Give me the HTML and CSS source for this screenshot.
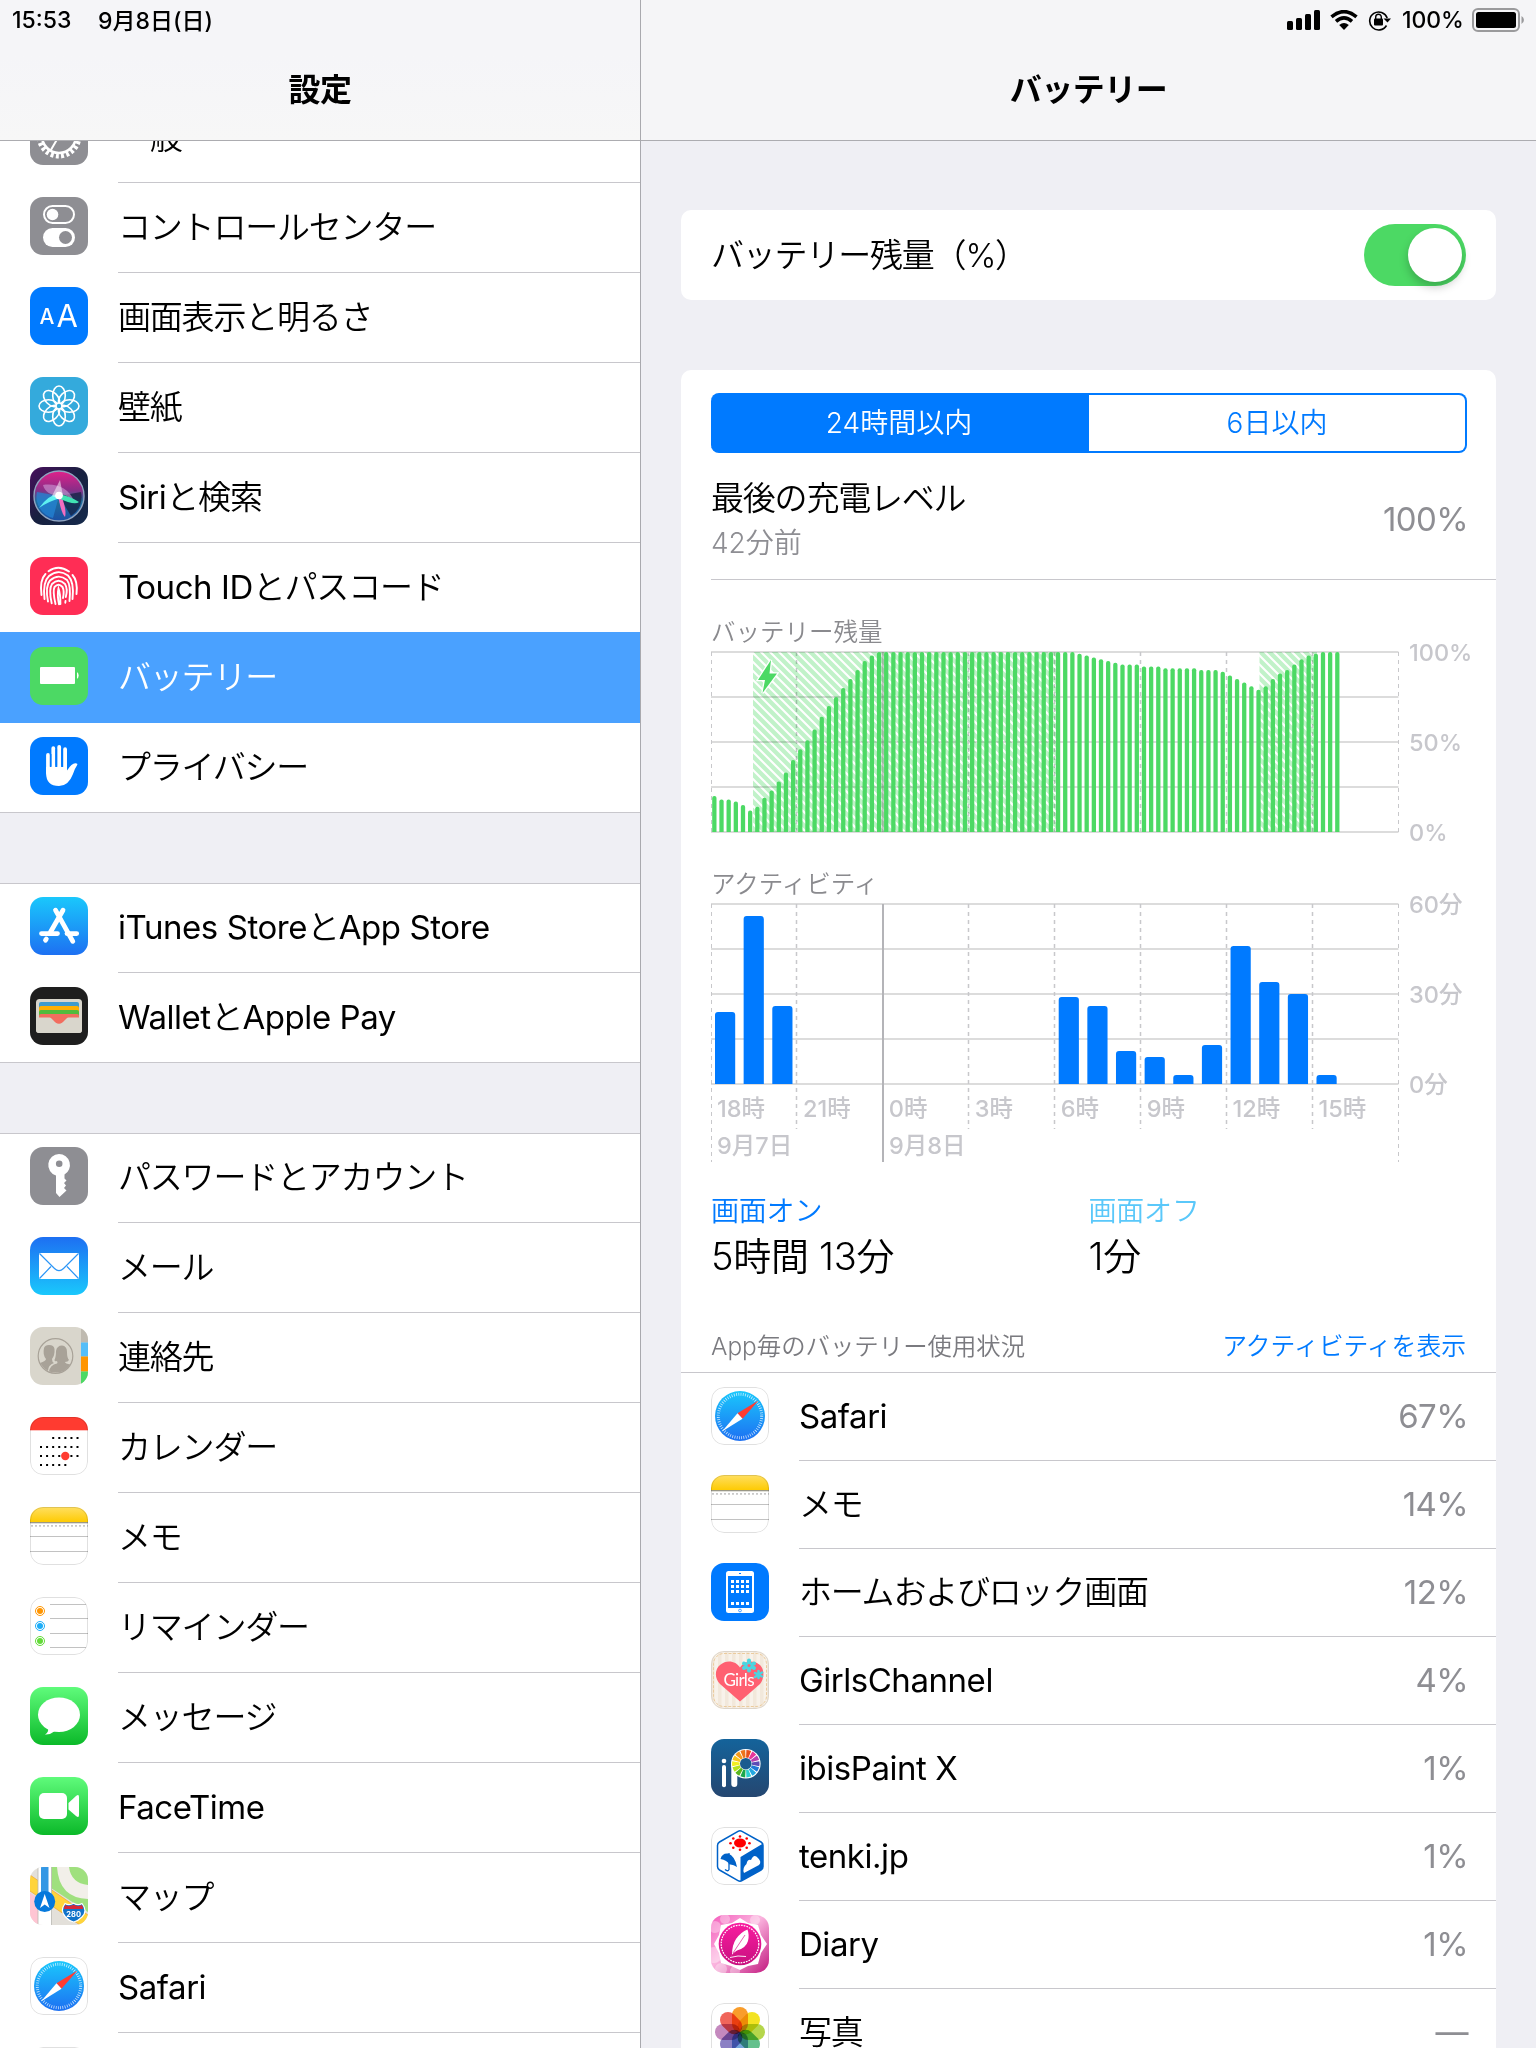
FILE: index.html
```html
<!DOCTYPE html>
<html lang="ja">
<head>
    <meta charset="UTF-8">
    <meta name="viewport" content="width=device-width, initial-scale=1.0">
    <title>設定</title>
    <link rel="stylesheet" href="styles.css">
</head>
<body>

    <svg class="defs" width="0" height="0">
        <defs>
            <linearGradient id="g-blue" x1="0" y1="0" x2="0" y2="1"><stop offset="0" stop-color="#1ac8fc"/><stop offset="1" stop-color="#1d70f2"/></linearGradient>
            <linearGradient id="g-mail" x1="0" y1="0" x2="0" y2="1"><stop offset="0" stop-color="#1d6ff2"/><stop offset="1" stop-color="#1ac8fc"/></linearGradient>
            <linearGradient id="g-green" x1="0" y1="0" x2="0" y2="1"><stop offset="0" stop-color="#5ffb7b"/><stop offset="1" stop-color="#0bb929"/></linearGradient>
            <linearGradient id="g-yellow" x1="0" y1="0" x2="0" y2="1"><stop offset="0" stop-color="#ffdf62"/><stop offset="1" stop-color="#fecb03"/></linearGradient>
            <linearGradient id="g-ibis" x1="0" y1="0" x2="0" y2="1"><stop offset="0" stop-color="#14639b"/><stop offset="1" stop-color="#254670"/></linearGradient>
            <linearGradient id="g-siri" x1="0" y1="0" x2="0" y2="1"><stop offset="0" stop-color="#e0218a"/><stop offset=".38" stop-color="#8a2d87"/><stop offset=".6" stop-color="#1f6f9c"/><stop offset="1" stop-color="#1b4fa5"/></linearGradient>
            <linearGradient id="g-siribg" x1="0" y1="0" x2="1" y2="1"><stop offset="0" stop-color="#48105c"/><stop offset=".5" stop-color="#17203f"/><stop offset="1" stop-color="#152a4c"/></linearGradient>
            <linearGradient id="g-diary" x1="0" y1="0" x2="1" y2="1"><stop offset="0" stop-color="#f45bbb"/><stop offset=".45" stop-color="#fbb5df"/><stop offset="1" stop-color="#c2187f"/></linearGradient>
            <linearGradient id="g-badge" x1="0" y1="0" x2="0" y2="1"><stop offset="0" stop-color="#f91ca0"/><stop offset="1" stop-color="#c8107f"/></linearGradient>
            <pattern id="cloth" width="7" height="58" patternUnits="userSpaceOnUse"><rect width="7" height="58" fill="#f8f2ea"/><rect width="3.5" height="58" fill="#f2e8db"/></pattern>
        </defs>
    </svg>

    <!-- アイコン -->
    <template id="icons"><svg>
        <g id="i-gear">
            <rect width="58" height="58" fill="#8e8e93"/>
            <circle cx="29" cy="29" r="17" fill="none" stroke="#fff" stroke-width="2.6"/>
            <circle cx="29" cy="29" r="20" fill="none" stroke="#fff" stroke-width="5" stroke-dasharray="2.9 2.34"/>
            <path d="M29 29L20 44.500M29 29L20 13.500M29 29H46" stroke="#fff" stroke-width="2"/>
        </g>
        <g id="i-control">
            <rect width="58" height="58" fill="#8e8e93"/>
            <rect x="14" y="9" width="30" height="17" rx="8.500" fill="none" stroke="#fff" stroke-width="2"/>
            <circle cx="22.500" cy="17.500" r="5.800" fill="#fff"/>
            <rect x="13" y="31" width="32" height="19" rx="9.500" fill="#fff"/>
            <circle cx="35.500" cy="40.500" r="6.500" fill="#8e8e93"/>
        </g>
        <g id="i-display">
            <rect width="58" height="58" fill="#007aff"/>
            <text x="9.500" y="37" font-size="21" font-weight="500" class="glyph">A</text>
            <text x="26.500" y="39.500" font-size="31" class="glyph">A</text>
        </g>
        <g id="i-wall">
            <rect width="58" height="58" fill="#34aadc"/>
            <g fill="none" stroke="#fff" stroke-width="1.600">
                <ellipse cx="29" cy="18.500" rx="6.300" ry="9.500"/>
                <ellipse cx="29" cy="18.500" rx="6.300" ry="9.500" transform="rotate(45 29 29)"/>
                <ellipse cx="29" cy="18.500" rx="6.300" ry="9.500" transform="rotate(90 29 29)"/>
                <ellipse cx="29" cy="18.500" rx="6.300" ry="9.500" transform="rotate(135 29 29)"/>
                <ellipse cx="29" cy="18.500" rx="6.300" ry="9.500" transform="rotate(180 29 29)"/>
                <ellipse cx="29" cy="18.500" rx="6.300" ry="9.500" transform="rotate(225 29 29)"/>
                <ellipse cx="29" cy="18.500" rx="6.300" ry="9.500" transform="rotate(270 29 29)"/>
                <ellipse cx="29" cy="18.500" rx="6.300" ry="9.500" transform="rotate(315 29 29)"/>
                <circle cx="29" cy="29" r="3" fill="#34aadc"/>
            </g>
        </g>
        <g id="i-siri">
            <rect width="58" height="58" fill="url(#g-siribg)"/>
            <circle cx="29" cy="29" r="25" fill="url(#g-siri)" stroke="#8fa4c0" stroke-width="1.400"/>
            <path d="M7 25a22 22 0 0 0 16 26L29 29Z" fill="#2486d8" opacity=".7"/>
            <path d="M51 25a22 22 0 0 1-10 24L29 29Z" fill="#121b3a" opacity=".7"/>
            <path d="M13 18C24 16 40 20 44 35 38 28 31 26 29 28 23 29 15 26 13 18Z" fill="#cf9ad6" opacity=".6"/>
            <path d="M9 41Q20 26 29 28L31 31Q19 34 9 41Z" fill="#5ff1f0"/>
            <path d="M28 28L31 28Q37 43 35 50 31 46 28 28Z" fill="#f26dc0"/>
            <path d="M28 27Q40 29 49 35 45 39 28 31Z" fill="#41e3b4"/>
            <path d="M30 13L33 29 28 31 22 29Z" fill="#fff" opacity=".5"/>
            <circle cx="29" cy="28.500" r="3.800" fill="#fff"/>
        </g>
        <g id="i-touch">
            <rect width="58" height="58" fill="#ff2d55"/>
            <g fill="none" stroke="#fff" stroke-width="1.900" stroke-linecap="round">
                <path d="M18.500 14.200Q28.500 7 39 14.500"/>
                <path d="M11.500 38Q9.500 23 15.500 17"/>
                <path d="M42.500 18Q48 24 46.500 37"/>
                <path d="M14.500 42Q12.500 25 19 19 28.500 11.500 38 18.500 44.500 25 42.500 42"/>
                <path d="M18 44.500Q15 29 20 23.500 28.500 16 37 23 41 28 39.500 44"/>
                <path d="M21.700 46.300Q18.500 32 22 27 28.500 20.500 35 27 38 32 35.800 40M35.500 44L35.300 45.700"/>
                <path d="M25.500 47Q22.500 34 24.500 30 28.500 25.500 32.500 30 34.500 34 33 41"/>
                <path d="M29 47.300Q27 38 28.500 31.500 30.500 37 30.400 47"/>
            </g>
        </g>
        <g id="i-battery">
            <rect width="58" height="58" fill="#4cd964"/>
            <rect x="10" y="20" width="35" height="17" rx="1" fill="#fff"/>
            <path d="M47 25a4.500 4.500 0 0 1 0 7Z" fill="#fff"/>
        </g>
        <g id="i-privacy">
            <rect width="58" height="58" fill="#007aff"/>
            <g stroke="#fff" stroke-width="3.800" stroke-linecap="round" fill="none">
                <path d="M18 18V36M23.300 11.200V34M29.200 9.900V34M35.100 12.200V34"/>
            </g>
            <path d="M16.100 30H37V33.500Q42 26 45.500 26.300 48 26.600 47.200 28 45 31 43 37 38.500 49 29 49 16.100 49 16.100 36Z" fill="#fff"/>
            <path d="M20.650 17V29.500M26.300 12V28.500M32.150 12V28.500" stroke="#007aff" stroke-width="1.600"/>
        </g>
        <g id="i-store">
            <rect width="58" height="58" fill="url(#g-blue)"/>
            <g stroke="#fff" stroke-width="4.800" stroke-linecap="round">
                <path d="M33 13.200L20.500 35M25.500 13.200L42.800 44.300M15.500 43.200L16.300 42"/>
                <path d="M11.500 36.600H27.500M37 36.600H46.700"/>
            </g>
        </g>
        <g id="i-wallet">
            <rect width="58" height="58" fill="#1e1e1e"/>
            <rect x="6" y="12" width="46" height="34" rx="3.500" fill="#d9d6cc"/>
            <path d="M9 21V17q0-2 2-2H47q2 0 2 2V21Z" fill="#3f9bcf"/>
            <path d="M9 25V21q0-2 2-2H47q2 0 2 2V25Z" fill="#ffb003"/>
            <path d="M9 29V25q0-2 2-2H47q2 0 2 2V29Z" fill="#52bb3d"/>
            <path d="M9 33V29q0-2 2-2H47q2 0 2 2V33Z" fill="#f26d5f"/>
            <path d="M6 30.500H19.500C23 30.500 24 36.800 29 36.800S35 30.500 38.500 30.500H52V43q0 3-3 3H9q-3 0-3-3Z" fill="#d9d6cc"/>
            <path d="M19.500 30.500C23 30.500 24 36.800 29 36.800S35 30.500 38.500 30.500Z" fill="#f26d5f"/>
        </g>
        <g id="i-key">
            <rect width="58" height="58" fill="#8e8e93"/>
            <path d="M29 7a11 11 0 0 1 5.500 20.500V31.500l2 2-2.500 2.500 2 2.500-2 2.500 2.500 2.500L29.500 50 26 46V28.500A11 11 0 0 1 29 7Z" fill="#fff"/>
            <circle cx="29.200" cy="16.800" r="3.300" fill="#8e8e93"/>
        </g>
        <g id="i-mail">
            <rect width="58" height="58" fill="url(#g-mail)"/>
            <rect x="9" y="16" width="40" height="26" rx="1" fill="#fff"/>
            <path d="M9.500 16.500L24.500 31.500Q29 36 33.500 31.500L48.500 16.500M9.500 41.500L21 29.500M48.500 41.500L37 29.500" fill="none" stroke="#2b95f6" stroke-width="1.200"/>
        </g>
        <g id="i-contacts">
            <rect width="58" height="58" fill="#d9d6cc"/>
            <rect x="51" width="7" height="15.500" fill="#bfbab0"/>
            <rect x="51" y="15.500" width="7" height="14" fill="#56bef8"/>
            <rect x="51" y="29.500" width="7" height="15" fill="#ff9500"/>
            <rect x="51" y="44.500" width="7" height="14" fill="#4cd964"/>
            <circle cx="25.500" cy="29" r="17.300" fill="none" stroke="#a8a298" stroke-width="1.200"/>
            <path d="M10 36Q16 34 16 32 12.500 28 14 21 15 18 19 18 24 18 24.500 22 25 28 22 32 22 35 24 36 18 38 18 44 13 41 10 36Z" fill="#a8a298"/>
            <path d="M19 44.500Q20 38 27 36.500 28 36 27 34 24.500 35 24.500 33 26 30 26 24 27 18.500 32 18.500 37 19 37 25 37 31 39 33 38 35 35 35 35 36.500 40.500 37.500 35 46 25.500 45.500 22 45.500 19 44.500Z" fill="#a8a298"/>
        </g>
        <g id="i-calendar">
            <rect width="58" height="58" fill="#fff"/>
            <rect width="58" height="13.300" fill="#ff3b30"/>
            <g stroke="#000" stroke-width="2" stroke-dasharray="2 4.080">
                <path d="M22.200 21H49M10 30H49M10 39H49M10 48H37"/>
            </g>
            <circle cx="35.300" cy="39" r="4.200" fill="#ff3b30"/>
        </g>
        <g id="i-notes">
            <rect width="58" height="58" fill="#fff"/>
            <rect width="58" height="15" fill="url(#g-yellow)"/>
            <rect y="15" width="58" height="1.300" fill="#9b9886"/>
            <path d="M1 18.800H58" stroke="#c9c9c9" stroke-width="1.800" stroke-dasharray="2 2"/>
            <path d="M0 29.500H58M0 44.500H58" stroke="#c2c2c2"/>
        </g>
        <g id="i-reminders">
            <rect width="58" height="58" fill="#fff"/>
            <path d="M20 7.500H56M20 21.500H58M20 36.500H58M20 50.500H56" stroke="#c2c2c2"/>
            <circle cx="10" cy="14" r="4.500" fill="none" stroke="#ff9500"/><circle cx="10" cy="14" r="3" fill="#ff9500"/>
            <circle cx="10" cy="29" r="4.500" fill="none" stroke="#1badf8"/><circle cx="10" cy="29" r="3" fill="#1badf8"/>
            <circle cx="10" cy="44" r="4.500" fill="none" stroke="#63da38"/><circle cx="10" cy="44" r="3" fill="#63da38"/>
        </g>
        <g id="i-messages">
            <rect width="58" height="58" fill="url(#g-green)"/>
            <ellipse cx="29" cy="27.700" rx="21" ry="17.300" fill="#fff"/>
            <path d="M18 41Q19 45 15 47.500 20 48 25 44Z" fill="#fff"/>
        </g>
        <g id="i-facetime">
            <rect width="58" height="58" fill="url(#g-green)"/>
            <rect x="9" y="16" width="28" height="26" rx="5" fill="#fff"/>
            <path d="M38.500 26L46 19Q49 16.500 49 20V38Q49 41.500 46 39L38.500 32.500Z" fill="#fff"/>
        </g>
        <g id="i-maps">
            <rect width="58" height="58" fill="#e3e0da"/>
            <path d="M0 8L58 48V58H50L0 24Z" fill="#ffd43b"/>
            <path d="M0 8L58 48M0 24L50 58" stroke="#f3a93a" stroke-width=".8"/>
            <path d="M0 26L8 31V58H0Z" fill="#ffc5d3"/>
            <path d="M21 0H58V45L50 40 21 21Z" fill="#9fe07e"/>
            <path d="M27 0Q29 31 58 32V18Q41 16 39 0Z" fill="#f2efe9"/>
            <rect x="8" width="13.500" height="58" fill="#fff"/>
            <path d="M8 0V58M21.500 0V58" stroke="#b9b7b1" stroke-width=".8"/>
            <rect x="11" width="7.500" height="30" fill="#3498e4"/>
            <circle cx="14.700" cy="34.500" r="10.500" fill="#0579dc"/>
            <path d="M14.700 27L19.500 41 14.700 37.500 10 41Z" fill="#fff"/>
            <path d="M35 36.500Q39 39 43.700 36.300 48 39 52 36.500 58 44 52 50 48 54 43.700 55 39 54 35.500 50 29.500 44 35 36.500Z" fill="#1173c9" stroke="#fff" stroke-width="1.200"/>
            <path d="M34 42Q33.500 40 35.500 38 39 40 43.700 37.800 48 40 51.800 38 53.500 40 53 42Z" fill="#d5283a"/>
            <text x="43.700" y="49.500" font-size="7.500" font-weight="bold" text-anchor="middle" class="glyph">280</text>
        </g>
        <g id="i-safari">
            <rect width="58" height="58" fill="#fff"/>
            <circle cx="29" cy="29" r="25" fill="url(#g-blue)"/>
            <circle cx="29" cy="29" r="21.700" fill="none" stroke="#fff" stroke-width="3" stroke-dasharray=".8 1.472" opacity=".75"/>
            <path d="M47.500 13.500L31.500 31.800 26.500 26.200Z" fill="#ff3b30"/>
            <path d="M11 44.500L26.500 26.200 31.500 31.800Z" fill="#fff"/>
        </g>
        <g id="i-home">
            <rect width="58" height="58" fill="#007aff"/>
            <rect x="15" y="8" width="28" height="42" rx="2.500" fill="#fff"/>
            <rect x="17" y="13" width="24" height="32" fill="#007aff"/>
            <path d="M20 18.500H39M20 23.500H39M20 28.500H39M20 40.500H39" stroke="#fff" stroke-width="3" stroke-dasharray="3 2"/>
            <path d="M28 10.500H30" stroke="#007aff"/>
            <circle cx="29" cy="47.500" r="1.400" fill="none" stroke="#007aff" stroke-width=".7"/>
        </g>
        <g id="i-girls">
            <rect width="58" height="58" fill="url(#cloth)"/>
            <rect x=".5" y=".5" width="57" height="57" rx="12.500" fill="none" stroke="#ddd5ca"/>
            <rect x="2.500" y="2.500" width="53" height="53" rx="10.500" fill="none" stroke="#ebcb9d" stroke-dasharray="3 1.500"/>
            <path d="M29 50.500L9 33C3 27 4 18 9 14 16 8 25 10 29 16.500 33 10 42 8 49 14 54 19 53 28 49 33Z" fill="#ff6071"/>
            <g stroke="#4bd5e0" stroke-width="4" stroke-linecap="round"><path d="M38 9.500V19.500M33 12.500L43 17M43 12.500L33 17"/></g>
            <g stroke="#4bd5e0" stroke-width="2.500" stroke-linecap="round"><path d="M47.500 20V27M44 22L51 25.500M51 21.500L44 26"/></g>
            <circle cx="38" cy="14.500" r="1.500" fill="#ff6071"/>
            <text x="28" y="35" font-size="17" text-anchor="middle" textLength="31" class="glyph lato">Girls</text>
        </g>
        <g id="i-ibis">
            <rect width="58" height="58" fill="url(#g-ibis)"/>
            <circle cx="13" cy="22" r="2.300" fill="#fff"/>
            <path d="M13 28V46.300" stroke="#fff" stroke-width="4" stroke-linecap="round"/>
            <path d="M23.300 25V45" stroke="#fff" stroke-width="6" stroke-linecap="round"/>
            <circle cx="34.800" cy="24.700" r="14.800" fill="#fff"/>
            <g id="wheel" fill="none" stroke-width="7.500"></g>
            <circle cx="34.800" cy="24.700" r="5.800" fill="#1a5b8f"/>
        </g>
        <g id="i-tenki">
            <rect width="58" height="58" fill="#fff"/>
            <path d="M27 4.300Q29 3.200 31 4.300L50 15Q52 16.200 52 18.500V39.500Q52 41.700 50 43L31 53.700Q29 54.800 27 53.700L8.500 43Q6.500 41.700 6.500 39.500V18.500Q6.500 16.200 8.500 15Z" fill="#fff" stroke="#0062c8" stroke-width="1.500"/>
            <path d="M29.500 30L52 16.500V40.500Q52 42 50 43L29.500 54.500Z" fill="#0062c8"/>
            <path d="M33 46Q31 41 35.500 37 36.500 32 40 33 43 26 47 31 51 35 48 38Z" fill="#fff"/>
            <ellipse cx="29" cy="16" rx="6" ry="4.500" fill="#f00"/>
            <g fill="#f00"><circle cx="29" cy="9.500" r="1.300"/><circle cx="29" cy="22.800" r="1.300"/><circle cx="19.500" cy="16.200" r="1.300"/><circle cx="38.500" cy="16.200" r="1.300"/><circle cx="22.300" cy="11.500" r="1.300"/><circle cx="35.700" cy="11.500" r="1.300"/><circle cx="22.300" cy="20.700" r="1.300"/><circle cx="35.700" cy="20.700" r="1.300"/></g>
            <path d="M9.500 32Q11 26 17 26.500 24 29 26 40 22 37 18.500 37.500 16 33 9.500 32Z" fill="#0062c8"/>
            <path d="M18 26V42.500Q17 45 14 42.500" fill="none" stroke="#0062c8" stroke-width="1.300"/>
        </g>
        <g id="i-diary">
            <rect width="58" height="58" fill="url(#g-diary)"/>
            <g fill="#fff" opacity=".35"><circle cx="4" cy="12" r="6"/><circle cx="14" cy="4" r="5"/><circle cx="3" cy="40" r="8"/><circle cx="10" cy="54" r="6"/><circle cx="44" cy="5" r="5"/><circle cx="24" cy="56" r="5"/></g>
            <path d="M29 3L37 8 47 10 50 20 56 29 50 38 47 49 37 51 29 55 20 51 10 48 8 38 3 29 8 20 10 10 21 8Z" fill="#fff"/>
            <circle cx="29" cy="29" r="21.300" fill="url(#g-badge)"/>
            <circle cx="29" cy="29" r="18.800" fill="none" stroke="#fff" stroke-width="1.200" stroke-dasharray="1.700 1"/>
            <path d="M21 40Q21 30 25 24 30 17 36.500 14.500 38.500 20 37 26 35 33 26 35.500Q23 37 20 41Z" fill="#fff"/>
            <path d="M19 42.500Q27 40 35 41.500" fill="none" stroke="#fff" stroke-width=".9"/>
            <path d="M22 38L34 20" stroke="#e0158e" stroke-width=".7"/>
        </g>
        <g id="i-photos">
            <rect width="58" height="58" fill="#fff"/>
            <g id="photo-petals"></g>
        </g>
        <g id="i-blank"><rect width="58" height="58" fill="#fff"/></g>
    </svg></template>

    <div class="sidebar">
        <div class="header">
            <div class="status">
                <span class="clock">15:53</span>
                <span class="date">9月8日(日)</span>
            </div>
            <h1>設定</h1>
        </div>
        <div class="list">
            <div class="group first" id="group1"></div>
            <div class="group" id="group2"></div>
            <div class="group" id="group3"></div>
        </div>
    </div>

    <div class="detail">
        <div class="header">
            <div class="status right">
                <svg class="signal" width="33" height="20" viewBox="0 0 33 20">
                    <rect x="0" y="11" width="6" height="9" rx="1.500"/><rect x="9" y="8" width="6" height="12" rx="1.500"/><rect x="18" y="4" width="6" height="16" rx="1.500"/><rect x="27" y="0" width="6" height="20" rx="1.500"/>
                </svg>
                <svg class="wifi" width="28" height="20" viewBox="0 0 28 20">
                    <path d="M1.500 6.800Q14-3.500 26.500 6.800M6 11.300Q14 4.500 22 11.300" fill="none" stroke="#000" stroke-width="3.600"/>
                    <path d="M9.200 15Q14 11 18.800 15L14 20Z"/>
                </svg>
                <svg class="lock" width="24" height="22" viewBox="0 0 24 22">
                    <path d="M18.500 16.500A9 9 0 1 1 19.200 9" fill="none" stroke="#000" stroke-width="1.600"/>
                    <path d="M15.500 9.500H23L19.500 13.500Z"/>
                    <rect x="6" y="9.500" width="9" height="7" rx="1"/>
                    <path d="M7.700 10V8a2.800 2.800 0 0 1 5.600 0V10" fill="none" stroke="#000" stroke-width="1.400"/>
                </svg>
                <span class="pct">100%</span>
                <svg class="cell" width="54" height="24" viewBox="0 0 54 24">
                    <rect x="1" y="1" width="46" height="22" rx="5" fill="none" stroke="#9a9a9c" stroke-width="2"/>
                    <rect x="4" y="4" width="40" height="16" rx="2.500"/>
                    <path d="M49.500 8a4.500 4.500 0 0 1 0 8Z" fill="#9a9a9c"/>
                </svg>
            </div>
            <h1>バッテリー</h1>
        </div>

        <div class="content">
            <div class="card toggle-card">
                <span class="label">バッテリー残量（%）</span>
                <div class="toggle"><div class="knob"></div></div>
            </div>

            <div class="card">
                <div class="segmented">
                    <div class="seg active">24時間以内</div>
                    <div class="seg">6日以内</div>
                </div>
                <div class="last-charge">
                    <div>
                        <div class="label">最後の充電レベル</div>
                        <div class="sub">42分前</div>
                    </div>
                    <div class="value">100%</div>
                </div>
                <div class="chart-title level-title">バッテリー残量</div>
                <svg class="chart" id="level-chart" width="755" height="200" viewBox="0 0 755 200"></svg>
                <div class="chart-title activity-title">アクティビティ</div>
                <svg class="chart" id="activity-chart" width="755" height="280" viewBox="0 0 755 280"></svg>
                <div class="summary">
                    <div>
                        <div class="on">画面オン</div>
                        <div class="time">5時間 13分</div>
                    </div>
                    <div>
                        <div class="off">画面オフ</div>
                        <div class="time">1分</div>
                    </div>
                </div>
                <div class="usage-head">
                    <span>App毎のバッテリー使用状況</span>
                    <span class="link">アクティビティを表示</span>
                </div>
                <div id="apps"></div>
            </div>
        </div>
    </div>

    <script src="script.js"></script>
</body>
</html>
```
FILE: styles.css
```css
* { box-sizing: border-box; }
body {
    margin: 0;
    width: 1536px;
    height: 2048px;
    overflow: hidden;
    display: flex;
    background: #efeff4;
    color: #000;
    font-family: Inter, "Noto Sans CJK JP", sans-serif;
    font-weight: 400;
}
.defs { position: absolute; }
.glyph { fill: #fff; font-family: Inter, sans-serif; letter-spacing: 0; }
.lato { font-family: Lato, sans-serif; }

.sidebar {
    width: 641px;
    height: 2048px;
    border-right: 1px solid #a9a9ae;
    overflow: hidden;
    display: flex;
    flex-direction: column;
}
.detail { width: 895px; height: 2048px; overflow: hidden; display: flex; flex-direction: column; }

/* header */
.header {
    height: 141px;
    flex: none;
    background: #f5f5f7;
    border-bottom: 1px solid #acacb0;
}
.sidebar .header { background: linear-gradient(#f5f5f8 40%, #f7f7f7); }
.header h1 {
    margin: 0;
    height: 100px;
    line-height: 100px;
    font-size: 32px;
    font-weight: 700;
    letter-spacing: -0.5px;
    text-align: center;
}
.status {
    height: 40px;
    display: flex;
    align-items: center;
    padding-left: 12px;
    font-size: 23px;
    font-weight: 500;
}
.clock { width: 86px; }
.date { padding-bottom: 3px; }
.status.right { padding: 0 10px 0 0; justify-content: flex-end; }
.wifi { margin-left: 10px; }
.lock { margin-left: 10px; }
.pct { margin-left: 10px; width: 63px; letter-spacing: -0.1px; }
.cell { margin-left: 7px; }

/* sidebar */
.list { flex: 1; overflow: hidden; }
.group {
    margin-bottom: 70px;
    background: #fff;
    box-shadow: inset 0 1px #c8c7cc;
}
.group.first { margin-top: -48px; box-shadow: none; }
.row {
    height: 90px;
    display: flex;
    border-bottom: 1px solid transparent;
    padding-left: 30px;
}
.row .icon { margin-top: 14px; }
.row .name {
    flex: 1;
    height: 90px;
    margin-left: 30px;
    line-height: 88px;
    border-bottom: 1px solid #c8c7cc;
}
.row:last-child { border-bottom-color: #c8c7cc; }
.row:last-child .name { border-bottom: none; }
.row.selected { position: relative; background: #4aa1ff; color: #fff; height: 91px; margin-top: -1px; padding-top: 1px; }
.row.selected .name { border-bottom-color: transparent; }
.icon { width: 58px; height: 58px; flex: none; border-radius: 13px; display: block; }
.name, .label { font-size: 33px; letter-spacing: -1.2px; white-space: nowrap; font-weight: 350; }
.en { font-weight: 400; letter-spacing: -0.45px; }

/* detail */
.content { padding: 69px 40px 0; }
.card { background: #fff; border-radius: 10px; }
.toggle-card {
    height: 90px;
    margin-bottom: 70px;
    padding: 0 30px;
    display: flex;
    align-items: center;
    justify-content: space-between;
}
.toggle-card .label { padding-bottom: 4px; }
.toggle { width: 102px; height: 62px; border-radius: 31px; background: #4cd964; padding: 4px; display: flex; justify-content: flex-end; }
.knob { width: 54px; height: 54px; border-radius: 50%; background: #fff; box-shadow: 0 5px 10px rgba(0, 0, 0, 0.22); }

.segmented {
    height: 84px;
    padding: 23px 29px 0 30px;
    display: flex;
}
.seg {
    width: 50%;
    height: 60px;
    line-height: 56px;
    border: 2px solid #007aff;
    border-left: none;
    border-radius: 0 8px 8px 0;
    color: #007aff;
    font-size: 28px;
    font-weight: 350;
    text-align: center;
}
.seg.active { background: #007aff; color: #fff; border-radius: 8px 0 0 8px; }
.last-charge {
    height: 126px;
    margin-left: 30px;
    padding: 19px 28px 0 0;
    border-bottom: 1px solid #c8c7cc;
    display: flex;
    justify-content: space-between;
}
.last-charge .label { line-height: 50px; }
.sub { font-size: 28px; line-height: 40px; font-weight: 350; color: #8e8e93; }
.value { color: #8e8e93; font-size: 33px; line-height: 92px; letter-spacing: -0.6px; }
.chart-title { margin-left: 30px; height: 30px; line-height: 30px; font-size: 24.5px; font-weight: 350; color: #8a8a8e; }
.level-title { margin-top: 37px; }
.activity-title { margin-top: 22px; }
.chart { display: block; margin-left: 30px; overflow: visible; }
.axis { fill: #c7c7cc; font-size: 23.5px; font-weight: 500; }

.summary { height: 132px; margin: 12px 30px 0; display: flex; }
.summary > div { width: 378px; }
.on, .off { font-size: 28px; line-height: 40px; height: 40px; font-weight: 350; letter-spacing: -0.2px; }
.on { color: #007aff; }
.off { color: #5ac8fa; }
.time { font-size: 38px; line-height: 50px; letter-spacing: -0.3px; font-weight: 350; }
.usage-head {
    height: 50px;
    padding: 0 30px;
    display: flex;
    justify-content: space-between;
    line-height: 46px;
    font-size: 24.4px;
    font-weight: 350;
    color: #7a7a7f;
    border-bottom: 1px solid #c8c7cc;
}
.link { color: #007aff; font-size: 24.8px; }
.app { height: 88px; padding-left: 30px; display: flex; }
.app .icon { margin-top: 14px; }
.app .name { margin-left: 30px; line-height: 86px; flex: 1; display: flex; justify-content: space-between; padding-right: 28px; border-bottom: 1px solid #c8c7cc; }
.app .name .val { color: #8e8e93; font-weight: 400; letter-spacing: -0.6px; }
```
FILE: script.js
```js
// サイドバー: [アイコン, 名前, 選択中]
const groups = {
    group1: [
        ["gear", "一般"], ["control", "コントロールセンター"], ["display", "画面表示と明るさ"],
        ["wall", "壁紙"], ["siri", "<span class='en'>Siri</span>と検索"],
        ["touch", "<span class='en'>Touch ID</span>とパスコード"],
        ["battery", "バッテリー", true], ["privacy", "プライバシー"]
    ],
    group2: [
        ["store", "<span class='en'>iTunes Store</span>と<span class='en'>App Store</span>"],
        ["wallet", "<span class='en'>Wallet</span>と<span class='en'>Apple Pay</span>"]
    ],
    group3: [
        ["key", "パスワードとアカウント"], ["mail", "メール"], ["contacts", "連絡先"],
        ["calendar", "カレンダー"], ["notes", "メモ"], ["reminders", "リマインダー"],
        ["messages", "メッセージ"], ["facetime", "<span class='en'>FaceTime</span>"],
        ["maps", "マップ"], ["safari", "<span class='en'>Safari</span>"], ["blank", ""]
    ]
};
const lightIcons = ["calendar", "notes", "reminders", "safari", "tenki", "photos", "blank"];
const icons = document.getElementById("icons").content;

// ibisPaint のカラーホイール
const wheelColors = ["#e8501c", "#e6359a", "#b93fb0", "#5d4bb5", "#1f78d6", "#22a7e0", "#2bd0cf", "#1aa84c", "#58b51e", "#b7e21b", "#f2ee22", "#f9c41c", "#f59a1c", "#ee741c"];
const polar = (r, deg) => [34.8 + r * Math.sin(deg * Math.PI / 180), 24.7 - r * Math.cos(deg * Math.PI / 180)].join(" ");
const step = 360 / wheelColors.length;
icons.getElementById("wheel").innerHTML = wheelColors.map((c, i) =>
    `<path d="M${polar(10, i * step + 2.5)}A10 10 0 0 1 ${polar(10, (i + 1) * step - 2.5)}" stroke="${c}"/>`).join("");

// 写真アイコンの花びら
const petalColors = ["#f99d2b", "#f3e322", "#b5d64b", "#63c08c", "#75a5dc", "#8b80c4", "#c489be", "#f0655a"];
icons.getElementById("photo-petals").innerHTML = petalColors.map((c, i) =>
    `<rect x="21" y="4" width="16" height="25" rx="8" fill="${c}" style="mix-blend-mode:multiply" transform="rotate(${i * 45} 29 29)"/>`).join("");

function icon(name) {
    const outline = lightIcons.includes(name)
        ? '<rect x=".5" y=".5" width="57" height="57" rx="12.5" fill="none" stroke="#000" stroke-opacity=".12"/>' : "";
    return `<svg class="icon" viewBox="0 0 58 58">${icons.getElementById("i-" + name).innerHTML}${outline}</svg>`;
}

for (const id in groups) {
    document.getElementById(id).innerHTML = groups[id].map(([ic, name, selected]) => `
        <div class="row${selected ? " selected" : ""}">${icon(ic)}<div class="name">${name}</div></div>
    `).join("");
}

// App 毎の使用状況
const apps = [
    ["safari", "Safari", "67%"], ["notes", "メモ", "14%"], ["home", "ホームおよびロック画面", "12%"],
    ["girls", "GirlsChannel", "4%"], ["ibis", "ibisPaint X", "1%"], ["tenki", "tenki.jp", "1%"],
    ["diary", "Diary", "1%"], ["photos", "写真", "—"]
];
document.getElementById("apps").innerHTML = apps.map(([ic, name, val]) => `
    <div class="app">${icon(ic)}<div class="name"><span class="${/^[a-z]/i.test(name) ? "en" : ""}">${name}</span><span class="val">${val}</span></div></div>
`).join("");

// グラフ共通
const W = 687.4, H = 180, TOP = 5, BASE = TOP + H;
const line = (x1, y1, x2, y2, color, w, dash) =>
    `<line x1="${x1}" y1="${y1}" x2="${x2}" y2="${y2}" stroke="${color}" stroke-width="${w}"${dash ? ` stroke-dasharray="${dash}"` : ""}/>`;

function grid(bottom, longBottom) {
    let s = "";
    for (let i = 0; i <= 4; i++) s += line(0, TOP + i * 45, W, TOP + i * 45, "#dcdcdc", 2);
    for (let i = 0; i <= 8; i++) {
        if (i === 2) continue;
        const x = Math.floor(i * W / 8) + 0.5;
        s += line(x, TOP, x, i % 8 === 0 ? longBottom : bottom, "#c8c8cb", i % 8 === 0 ? 1 : 1.5, "4 4");
    }
    return s;
}
function bar(x, w, h, r, color) {
    return `<path d="M${x} ${BASE}V${BASE - h + r}q0 ${-r} ${r} ${-r}h${w - 2 * r}q${r} 0 ${r} ${r}V${BASE}Z" fill="${color}"/>`;
}

// バッテリー残量 (15分毎)
const levels = [
    20, 18, 18, 17, 15, 12, 14, 19, 23, 28, 33, 40, 46, 51, 57, 64, 70, 75, 80, 85, 90, 95, 98,
    ...Array(28).fill(100),
    99, 98, 97, 96, 95, 94, 93, 93, 93, 92, 92, 92, 91, 91, 91, 91, 91, 90, 90, 90, 89, 87, 85, 83, 81,
    79, 81, 85, 88, 90, 93, 96, 98, 99, 100, 100, 100
];
let s = `<defs><pattern id="hatch" width="9" height="9" patternUnits="userSpaceOnUse">
    <rect width="9" height="9" fill="#c1f2c9"/>
    <path d="M-2 -2L11 11M-2 7L2 11M7 -2L11 2" stroke="#fff" stroke-width="2.100"/></pattern></defs>`;
s += `<rect x="42" y="${TOP}" width="304" height="${H}" fill="url(#hatch)"/>`;
s += `<rect x="548.500" y="${TOP}" width="57.500" height="${H}" fill="url(#hatch)"/>`;
s += `<g style="mix-blend-mode:multiply">${grid(BASE, BASE)}</g>`;
levels.forEach((v, i) => { s += bar(1.2 + i * W / 96, 4.3, v / 100 * H, 2, "#4cd964"); });
s += line(171.8, TOP, 171.8, BASE, "rgba(110,110,110,0.45)", 2);
s += `<path d="M60 13L47 33H54L51.500 46 66 26.500H58.500L60 13Z" fill="#4cd964" stroke="#fff" stroke-width="2.500" paint-order="stroke"/>`;
["100%", "50%", "0%"].forEach((t, i) => { s += `<text class="axis" x="698" y="${TOP + 8.5 + i * 90}">${t}</text>`; });
document.getElementById("level-chart").innerHTML = s;

// アクティビティ (1時間毎, 分)
const minutes = [24, 56, 26, 0, 0, 0, 0, 0, 0, 0, 0, 0, 29, 26, 11, 9, 3, 13, 46, 34, 30, 3];
s = grid(230, 263);
minutes.forEach((v, i) => { if (v) s += bar(4 + i * W / 24, 20.2, v / 60 * H, 3, "#007aff"); });
s += line(172, TOP, 172, 263, "#b4b4b8", 2);
["60分", "30分", "0分"].forEach((t, i) => { s += `<text class="axis" x="698" y="${TOP + 8.5 + i * 90}">${t}</text>`; });
["18時", "21時", "0時", "3時", "6時", "9時", "12時", "15時"].forEach((t, i) => {
    s += `<text class="axis" x="${6 + i * W / 8}" y="218">${t}</text>`;
});
s += `<text class="axis" x="6" y="255">9月7日</text><text class="axis" x="178" y="255">9月8日</text>`;
document.getElementById("activity-chart").innerHTML = s;
```
